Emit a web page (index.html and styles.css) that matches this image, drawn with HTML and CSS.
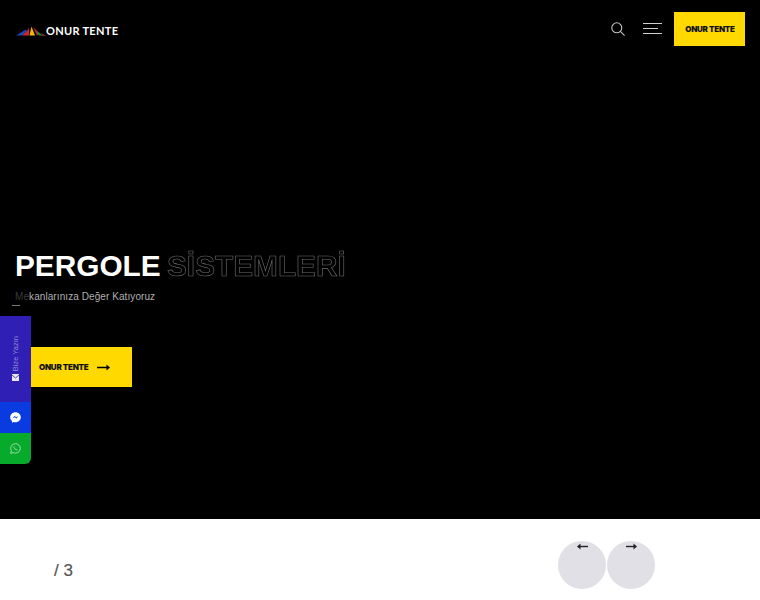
FILE: index.html
```html
<!DOCTYPE html>
<html lang="tr">
  <head>
    <meta charset="UTF-8" />
    <meta name="viewport" content="width=device-width, initial-scale=1.0" />
    <title>Onur Tente</title>
    <link rel="stylesheet" href="styles.css">
  </head>
  <body>
    <section class="hero">
      <header class="topbar">
        <a class="logo" href="#">
          <svg class="logo-mark" width="30" height="10" viewBox="0 0 30 10">
            <path d="M0 9.5 L10 3.5 L11 5 L6 9.5 Z" fill="#1f49b8" />
            <path d="M6 9.5 L11 5 L13 1.5 L13 9.5 Z" fill="#d02430" />
            <path d="M13.5 9.5 L15.5 0.5 L19 9.5 Z" fill="#f6b800" />
            <path d="M17 1 L24 8 L21 9.5 Z" fill="#d02430" />
            <path d="M20 4.5 L27 9.5 L23 9.5 Z" fill="#129040" />
            <path d="M25 7 L30 9.8 L27 9.8 Z" fill="#d02430" />
          </svg>
          <span>ONUR TENTE</span>
        </a>
        <div class="topbar-right">
          <svg class="icon-search" width="14" height="14" viewBox="0 0 14 14" fill="none" stroke="#c4c4c4" stroke-width="1.1">
            <circle cx="5.8" cy="5.8" r="5" />
            <path d="M9.4 9.4 L13.6 13.6" />
          </svg>
          <div class="burger">
            <span></span>
            <span class="short"></span>
            <span></span>
          </div>
          <a class="top-btn" href="#">ONUR TENTE</a>
        </div>
      </header>

      <div class="hero-text">
        <h1>PERGOLE <span class="outline">SİSTEMLERİ</span></h1>
        <p><span class="faded">Me</span>kanlarınıza Değer Katıyoruz</p>
        <a class="hero-btn" href="#">
          ONUR TENTE
          <svg width="13" height="7" viewBox="0 0 13 7">
            <path d="M0 3.5 H11" stroke="#000" stroke-width="1.5" />
            <path d="M9.5 0.5 L13 3.5 L9.5 6.5 Z" fill="#000" />
          </svg>
        </a>
      </div>
      <span class="dash"></span>

      <!-- fixed contact tabs on the left -->
      <aside class="contact">
        <a class="contact-write" href="#">
          <span class="write-label">Bize Yazın</span>
          <svg width="7" height="7" viewBox="0 0 7 7">
            <rect width="7" height="7" fill="#e8e8f5" />
            <path d="M0 1 L3.5 4 L7 1" fill="none" stroke="#2f1fb5" stroke-width="0.8" />
          </svg>
        </a>
        <a class="contact-msg" href="#">
          <svg width="11" height="11" viewBox="0 0 11 11">
            <path d="M5.5 0.2 C2.5 0.2 0.2 2.4 0.2 5.3 C0.2 6.9 0.9 8.2 2 9.1 V10.8 L3.6 9.9 C4.2 10.1 4.8 10.2 5.5 10.2 C8.5 10.2 10.8 8 10.8 5.2 C10.8 2.4 8.5 0.2 5.5 0.2 Z" fill="#fff" />
            <path d="M2.4 6.6 L4.6 4 L6.2 5.3 L8.6 4 L6.4 6.6 L4.8 5.3 Z" fill="#0a3be0" />
          </svg>
        </a>
        <a class="contact-wa" href="#">
          <svg width="11" height="11" viewBox="0 0 11 11" fill="none" stroke="#9fdcab" stroke-width="1">
            <path d="M0.7 10.3 L1.4 7.7 C0.9 6.9 0.7 6.2 0.7 5.4 C0.7 2.8 2.8 0.7 5.5 0.7 C8.2 0.7 10.3 2.8 10.3 5.4 C10.3 8 8.2 10.1 5.5 10.1 C4.7 10.1 4 9.9 3.3 9.6 Z" />
            <path d="M3.8 3.4 C3.6 5 5.6 7.2 7.5 7" />
          </svg>
        </a>
      </aside>
    </section>

    <section class="pager">
      <div class="count">/ 3</div>
      <div class="arrows">
        <button class="arrow" type="button">
          <svg width="11" height="7" viewBox="0 0 11 7">
            <path d="M2 3.5 H11" stroke="#222" stroke-width="1.4" />
            <path d="M3.5 0.5 L0 3.5 L3.5 6.5 Z" fill="#222" />
          </svg>
        </button>
        <button class="arrow" type="button">
          <svg width="11" height="7" viewBox="0 0 11 7">
            <path d="M0 3.5 H9" stroke="#222" stroke-width="1.4" />
            <path d="M7.5 0.5 L11 3.5 L7.5 6.5 Z" fill="#222" />
          </svg>
        </button>
      </div>
    </section>
  </body>
</html>
```

FILE: styles.css
```css
* {
  box-sizing: border-box;
}

html,
body {
  height: 600px;
  overflow: hidden;
}

body {
  margin: 0;
  background-color: #fff;
  font-family: "Liberation Sans", Arial, sans-serif;
}

a {
  text-decoration: none;
}

.hero {
  position: relative;
  height: 519px;
  background-color: #000;
  padding: 12px 15px 0 15px;
}

.topbar {
  display: flex;
  justify-content: space-between;
  align-items: center;
  height: 34px;
}

.logo {
  display: flex;
  align-items: center;
  gap: 0;
  margin-top: 3px;
  margin-left: 1px;
  color: #fff;
  font-family: "Lato", sans-serif;
  font-size: 11px;
  font-weight: 700;
  letter-spacing: 0.3px;
}

.logo-mark {
  margin-top: 1px;
}

.topbar-right {
  display: flex;
  align-items: center;
}

.icon-search {
  margin: 0 18px 0 0;
}

.burger {
  display: flex;
  flex-direction: column;
  gap: 4px;
  width: 19px;
  margin: 0 12px 2px 0;
}

.burger span {
  display: block;
  width: 19px;
  height: 1px;
  background-color: #d0d0d0;
}

.burger .short {
  width: 15px;
}

.top-btn {
  display: flex;
  align-items: center;
  justify-content: center;
  width: 71px;
  height: 34px;
  padding-left: 1px;
  background-color: #ffd900;
  color: #111;
  font-family: "Inter", sans-serif;
  font-size: 8px;
  font-weight: 900;
  letter-spacing: -0.25px;
}

.hero-text {
  margin-top: 201px;
}

.hero-text h1 {
  margin: 0;
  color: #fff;
  font-size: 29.8px;
  line-height: 38px;
  font-weight: 700;
  word-spacing: -2px;
}

.outline {
  display: inline-block;
  transform: translateZ(0);
  color: transparent;
  -webkit-text-stroke: 0.6px #6e6e6e;
}

.hero-text p {
  margin: 5px 0 0 0;
  color: #b0b0b0;
  font-size: 10px;
  line-height: 14px;
  letter-spacing: 0.08px;
}

.faded {
  color: #3a3a3a;
}

.dash {
  position: absolute;
  left: 12px;
  top: 305px;
  width: 8px;
  height: 1px;
  background-color: #777;
}

.hero-btn {
  display: flex;
  align-items: center;
  gap: 8px;
  width: 117px;
  height: 40px;
  margin-top: 43px;
  padding-left: 24px;
  background-color: #ffd900;
  color: #111;
  font-family: "Inter", sans-serif;
  font-size: 8px;
  font-weight: 900;
  letter-spacing: -0.25px;
}

.contact {
  position: absolute;
  left: 0;
  top: 316px;
  display: flex;
  flex-direction: column;
  width: 31px;
  height: 148px;
  border-bottom-right-radius: 6px;
  overflow: hidden;
}

.contact a {
  display: flex;
  align-items: center;
  justify-content: center;
}

.contact-write {
  flex-direction: column;
  gap: 3px;
  height: 86px;
  background-color: #2f1fb5;
  padding-bottom: 1px;
}

.write-label {
  writing-mode: vertical-rl;
  transform: rotate(180deg);
  color: #8f8ad2;
  font-size: 7.5px;
}

.contact-msg {
  height: 31px;
  background-color: #0a3be0;
}

.contact-wa {
  height: 31px;
  background-color: #08aa2c;
}

.pager {
  display: flex;
  justify-content: space-between;
  height: 81px;
  padding: 22px 105px 0 54px;
}

.count {
  margin-top: 20px;
  color: #555;
  font-size: 17px;
  line-height: 20px;
  -webkit-text-stroke: 0.2px #555;
}

.arrows {
  display: flex;
  gap: 1px;
}

.arrow {
  display: flex;
  justify-content: center;
  width: 48px;
  height: 48px;
  padding: 2px 0 0 0;
  border: 0;
  border-radius: 50%;
  background-color: #e0e0e6;
}
```
